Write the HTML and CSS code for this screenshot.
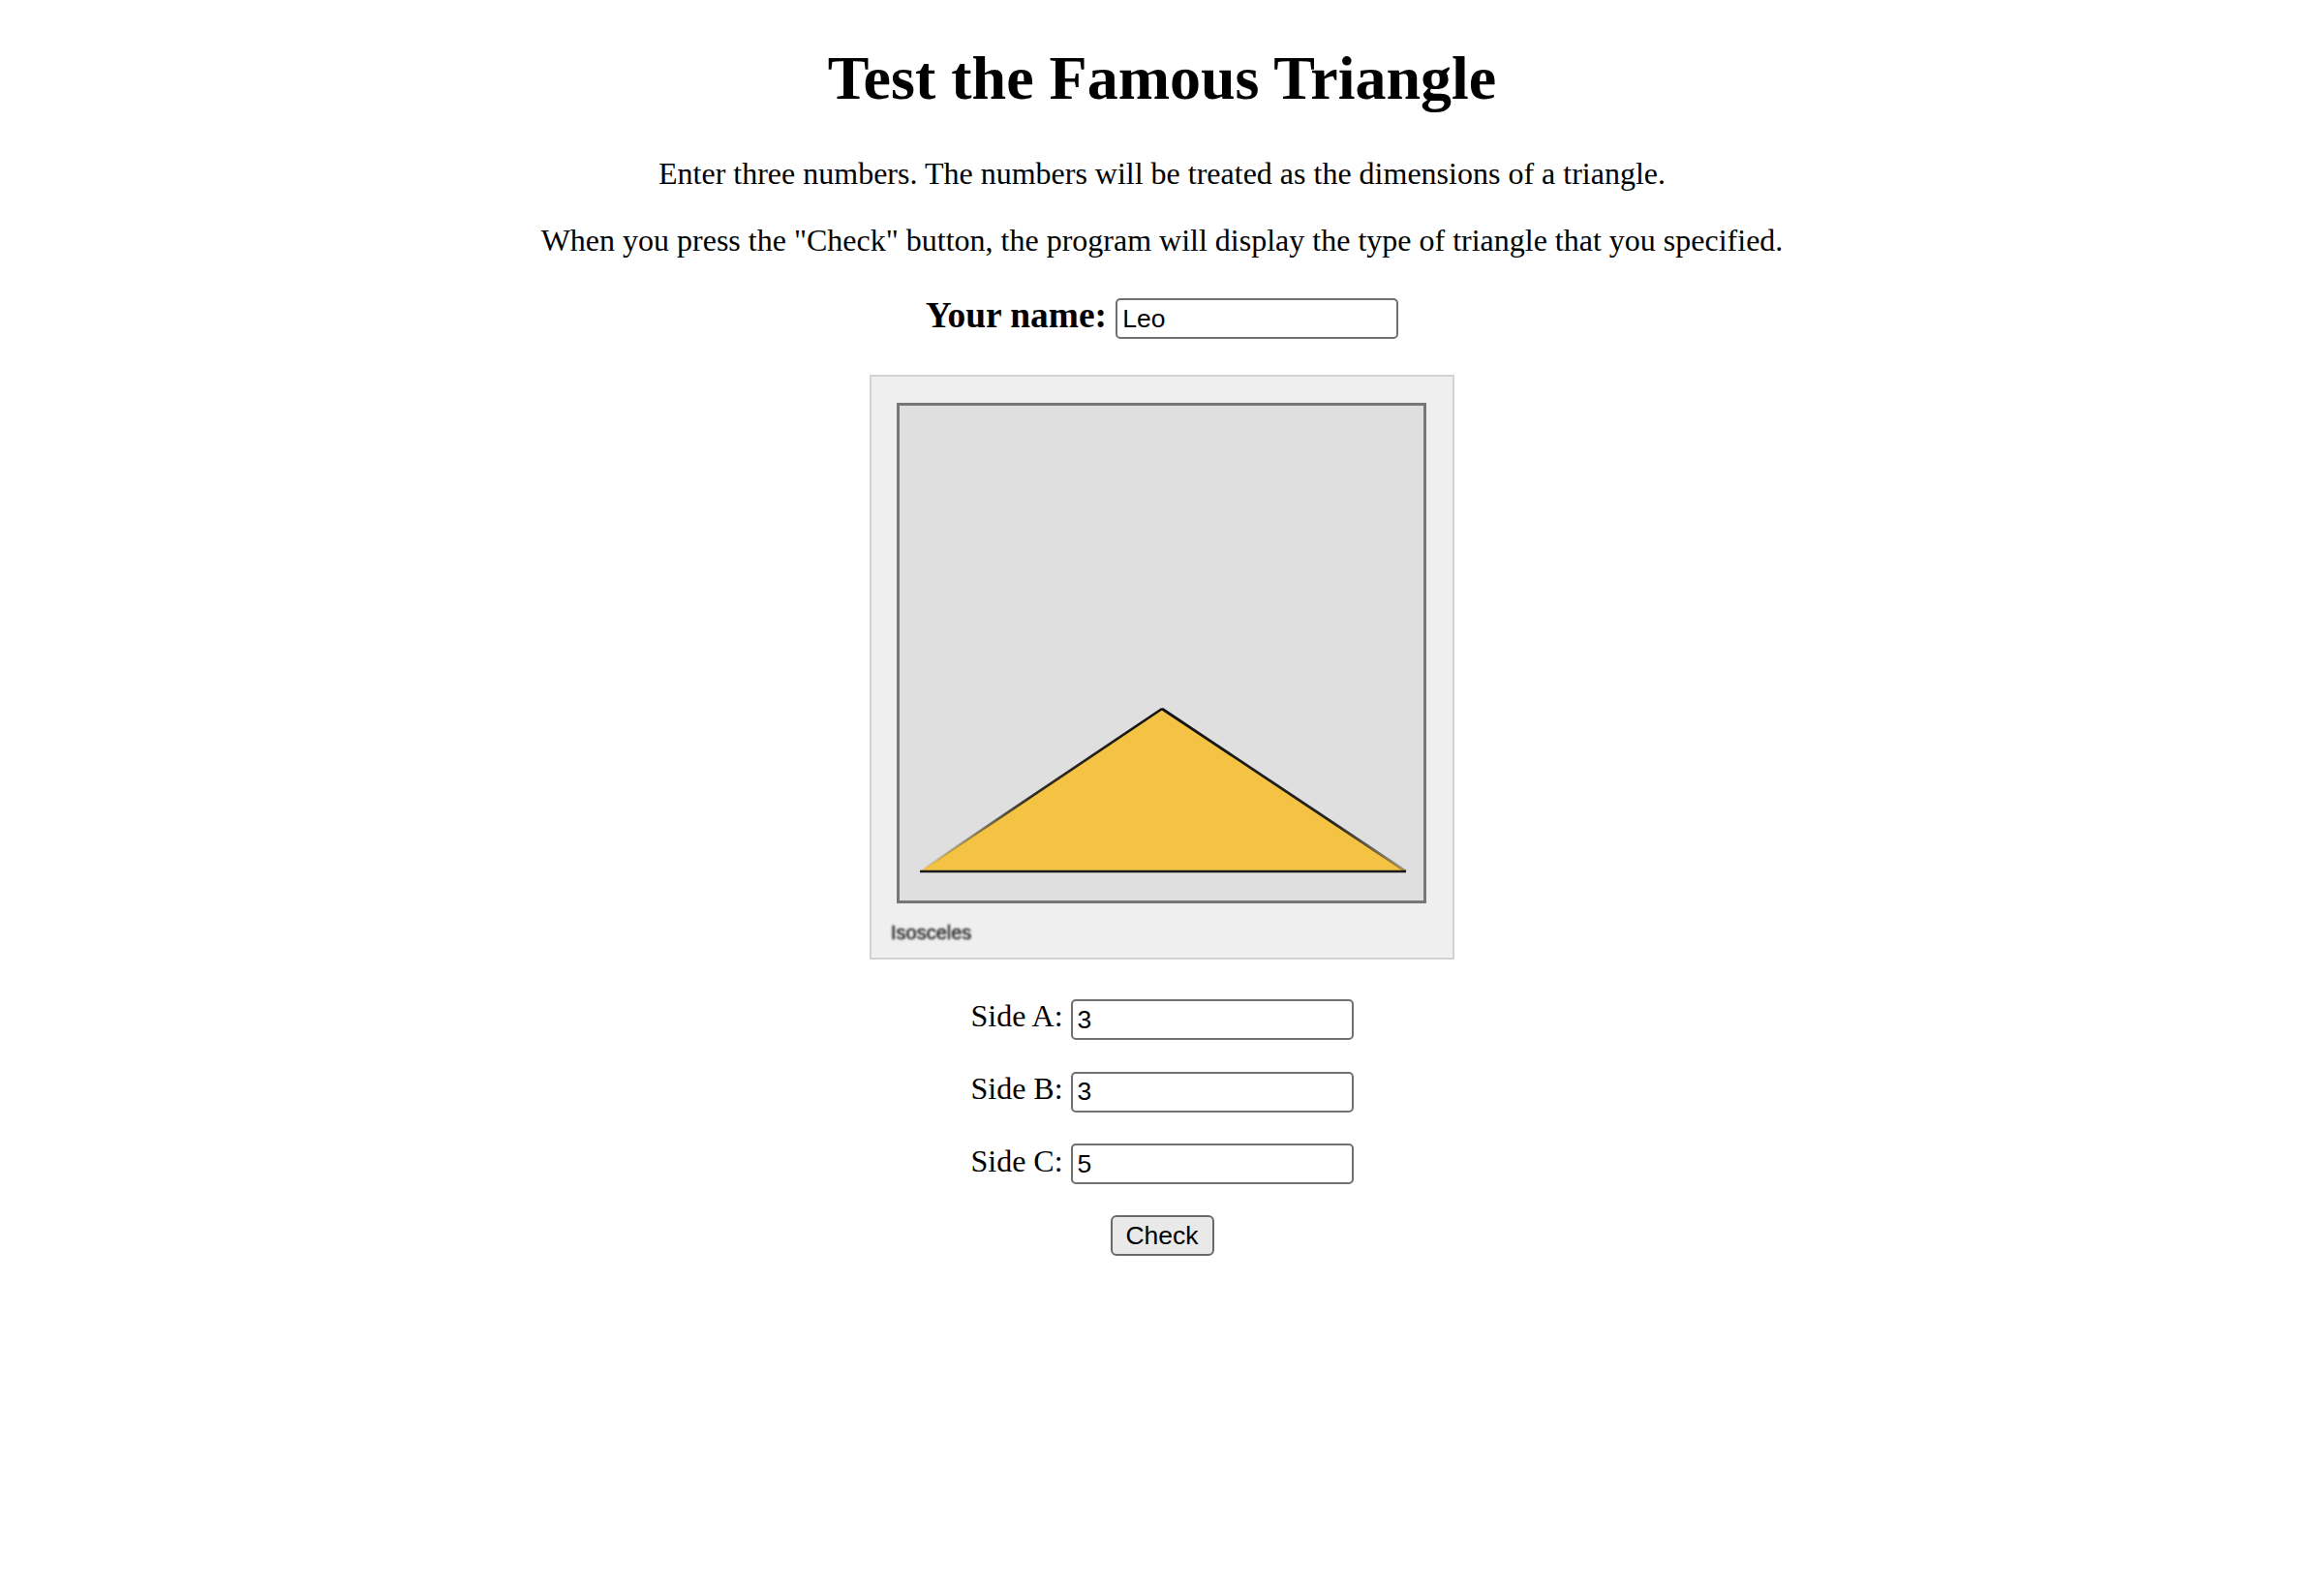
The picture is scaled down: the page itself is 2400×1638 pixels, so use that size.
FILE: index.html
```html
<!DOCTYPE html>
<html lang="en">
<head>
<meta charset="utf-8">
<title>Test the Famous Triangle</title>
<link rel="stylesheet" href="styles.css">
</head>
<body>
<h1 class="title">Test the Famous Triangle</h1>
<p class="intro">Enter three numbers. The numbers will be treated as the dimensions of a triangle.</p>
<p class="intro">When you press the "Check" button, the program will display the type of triangle that you specified.</p>
<h3 class="name-row">Your name: <input class="field" type="text" value="Leo"></h3>
<p class="figure-row"><span class="figure"><svg class="figure-svg" width="600" height="600" viewBox="0 0 600 600" xmlns="http://www.w3.org/2000/svg">
  <defs>
    <linearGradient id="leftEdge" x1="300" y1="343" x2="50" y2="511" gradientUnits="userSpaceOnUse">
      <stop offset="0" stop-color="#111" stop-opacity="1"/>
      <stop offset="0.55" stop-color="#111" stop-opacity="0.85"/>
      <stop offset="1" stop-color="#111" stop-opacity="0"/>
    </linearGradient>
    <linearGradient id="rightEdge" x1="300" y1="343" x2="552" y2="511" gradientUnits="userSpaceOnUse">
      <stop offset="0" stop-color="#111" stop-opacity="1"/>
      <stop offset="0.7" stop-color="#111" stop-opacity="0.9"/>
      <stop offset="1" stop-color="#111" stop-opacity="0.3"/>
    </linearGradient>
    <filter id="soft" x="-10%" y="-50%" width="120%" height="200%"><feGaussianBlur stdDeviation="0.8"/></filter>
  </defs>
  <rect x="27.5" y="28.5" width="544" height="514" fill="#dfdfdf" stroke="#777" stroke-width="3"/>
  <polygon points="300,343 552,511 50,511" fill="#f5c343"/>
  <line x1="300" y1="343" x2="50" y2="511" stroke="url(#leftEdge)" stroke-width="2.6"/>
  <line x1="300" y1="343" x2="552" y2="511" stroke="url(#rightEdge)" stroke-width="2.8"/>
  <line x1="50" y1="511" x2="552" y2="511" stroke="#1a1a1a" stroke-width="2.6"/>
  <text x="20" y="581" font-family="Liberation Sans, Arial, sans-serif" font-size="20" fill="#2a2a2a" stroke="#2a2a2a" stroke-width="0.5" filter="url(#soft)">Isosceles</text>
</svg></span></p>
<p class="side-row">Side A: <input class="field" type="text" value="3"></p>
<p class="side-row">Side B: <input class="field" type="text" value="3"></p>
<p class="side-row">Side C: <input class="field" type="text" value="5"></p>
<p class="button-row"><button class="check-btn" type="button">Check</button></p>
</body>
</html>
```
FILE: styles.css
```css
html {
  background: #ffffff;
}

body {
  margin: 16px;
  font-family: "Liberation Serif", "Times New Roman", serif;
  font-size: 32px;
  color: #000;
  text-align: center;
}

.title {
  font-size: 64px;
  font-weight: bold;
  margin: 28px 0 43px;
}

.intro {
  margin: 32px 0;
}

.name-row {
  font-size: 37.4px;
  font-weight: bold;
  margin: 37px 0;
}

.field {
  box-sizing: border-box;
  width: 292px;
  height: 42px;
  padding: 0 5px;
  border: 2px solid #707070;
  border-radius: 5px;
  font-family: "Liberation Sans", Arial, sans-serif;
  font-size: 26.5px;
  font-weight: normal;
  color: #000;
  background: #fff;
  vertical-align: middle;
}

.figure-row {
  margin: 37px 0 32px;
}

.figure {
  display: inline-block;
  width: 600px;
  height: 600px;
  border: 2px solid #d3d3d3;
  background: #efefef;
}

.figure-svg {
  display: block;
}

.side-row {
  margin: 32px 0;
}

.button-row {
  margin: 32px 0;
}

.check-btn {
  box-sizing: border-box;
  width: 107px;
  height: 42px;
  padding: 0;
  border: 2px solid #6a6a6a;
  border-radius: 6px;
  background: #e9e9e9;
  font-family: "Liberation Sans", Arial, sans-serif;
  font-size: 26.5px;
  color: #000;
}
```
